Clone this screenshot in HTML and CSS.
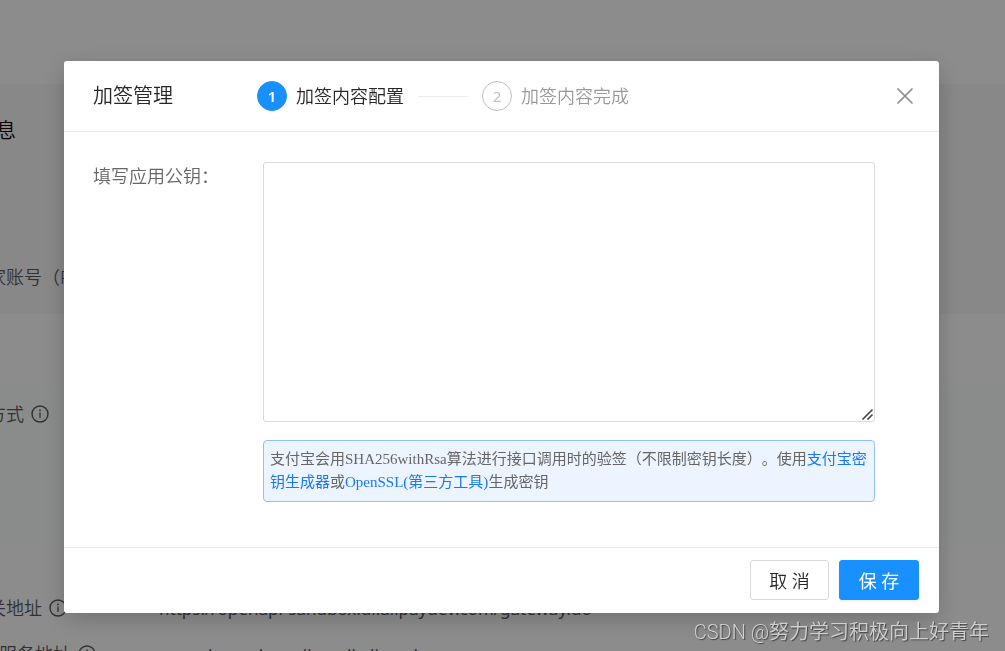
FILE: index.html
```
<!DOCTYPE html>
<html lang="zh-CN">
<head>
<meta charset="utf-8">
<title>加签管理</title>
<link rel="stylesheet" href="styles.css">
</head>
<body>
<svg class="sprite" aria-hidden="true">
  <symbol id="info" viewBox="0 0 18 18">
    <circle cx="9" cy="9" r="8" fill="none" stroke="currentColor" stroke-width="1.4"/>
    <circle cx="9" cy="5.4" r=".9" fill="currentColor"/>
    <path d="M9 7.6v5.4" stroke="currentColor" stroke-width="1.3"/>
  </symbol>
</svg>
<div class="page">
  <div class="topbar"></div>
  <section class="basic">
    <h2 class="heading"><span>息</span></h2>
    <div class="row account"><span class="label">家账号（PID）</span></div>
  </section>
  <section class="config">
    <div class="row method"><span class="label">方式<svg class="info"><use href="#info"/></svg></span></div>
  </section>
  <section class="addresses">
    <div class="row"><span class="label">关地址<svg class="info"><use href="#info"/></svg></span><span class="value">https://openapi-sandbox.dl.alipaydev.com/gateway.do</span></div>
    <div class="row"><span class="label wide">服务地址<svg class="info"><use href="#info"/></svg></span><span class="value">openchannel-sandbox.dl.alipaydev.com</span></div>
  </section>
</div>
<div class="mask">
  <div class="modal" role="dialog" aria-modal="true" aria-labelledby="title">
    <header class="modal-head">
      <h1 class="title" id="title">加签管理</h1>
      <ol class="steps">
        <li class="step active"><span class="num">1</span>加签内容配置</li>
        <li class="step"><span class="num">2</span>加签内容完成</li>
      </ol>
      <button class="close" type="button" aria-label="关闭"><svg viewBox="0 0 16 16"><path d="M1 1l14 14M15 1L1 15" stroke="currentColor" stroke-width="1.7" fill="none" stroke-linecap="round"/></svg></button>
    </header>
    <div class="modal-body">
      <label class="field-label" for="key">填写应用公钥：</label>
      <div class="field">
        <textarea class="key" id="key"></textarea>
        <p class="tip">支付宝会用SHA256withRsa算法进行接口调用时的验签（不限制密钥长度）。使用<a href="#">支付宝密钥生成器</a>或<a href="#">OpenSSL(第三方工具)</a>生成密钥</p>
      </div>
    </div>
    <footer class="modal-foot">
      <button class="btn" type="button">取 消</button>
      <button class="btn primary" type="button">保 存</button>
    </footer>
  </div>
</div>
<div class="watermark">CSDN @努力学习积极向上好青年</div>
</body>
</html>
```
FILE: styles.css
```
* { box-sizing: border-box; }
body {
  margin: 0;
  height: 100vh;
  overflow: hidden;
  font-family: "Noto Sans", "Noto Sans CJK SC", sans-serif;
  font-weight: 350;
  font-size: 18px;
  color: #262626;
  text-spacing-trim: space-all;
}
.sprite { position: absolute; width: 0; height: 0; }

.page { height: 100vh; overflow: hidden; background: #fff; color: #595959; }
.topbar { height: 84px; }
.basic { height: 230px; padding-top: 33px; background: #f8f8f8; }
.heading {
  display: flex;
  justify-content: flex-end;
  width: 16px;
  margin: 0 0 118px;
  font-size: 20px;
  line-height: 28px;
  font-weight: 350;
  color: #000;
}
.row { display: flex; line-height: 28px; height: 46px; white-space: nowrap; }
.label {
  display: flex;
  align-items: center;
  justify-content: flex-end;
  gap: 7px;
  width: 67px;
  height: 28px;
  margin-right: 92px;
}
.account .label { width: 107px; }
.method .label { width: 49px; }
.label.wide { width: 96px; margin-right: 63px; }
.value { font-size: 17px; font-weight: 400; line-height: 30px; }
.info { flex: none; width: 18px; height: 18px; }
.config { height: 264px; padding-top: 86px; background: linear-gradient(#fff 40px, #fbfffd 90px, #fbfffd 200px, #fff); }
.addresses { padding-top: 16px; }

.mask {
  position: fixed;
  inset: 0;
  padding: 61px 66px 0 64px;
  background: rgba(0, 0, 0, .45);
}
.modal {
  background: #fff;
  border-radius: 3px;
  box-shadow: 0 6px 24px rgba(0, 0, 0, .2);
}
.modal-head {
  display: flex;
  align-items: center;
  height: 71px;
  padding: 0 24px 0 29px;
  border-bottom: 1px solid #ebebeb;
}
.title { margin: 0; width: 164px; font-size: 20px; line-height: 28px; font-weight: 350; }
.steps { display: flex; flex: 1; margin: 0; padding: 0; list-style: none; }
.step { display: flex; align-items: center; line-height: 30px; color: #999; }
.step.active { color: #262626; }
.step.active::after { content: ""; width: 50px; height: 1px; margin: 0 14px; background: #ededed; }
.num {
  width: 30px;
  height: 30px;
  margin-right: 9px;
  border: 1px solid #bfbfbf;
  border-radius: 50%;
  font-size: 15px;
  line-height: 28px;
  font-weight: 400;
  text-align: center;
  color: #bfbfbf;
}
.active .num { background: #1890ff; border-color: #1890ff; color: #fff; font-weight: 600; }
.close { display: flex; padding: 2px; border: 0; background: none; color: #8c8c8c; }
.close svg { width: 16px; height: 16px; }

.modal-body { display: flex; padding: 30px 64px 45px 29px; }
.field-label { flex: none; width: 170px; line-height: 28px; color: #666; }
.field { flex: 1; }
.key {
  display: block;
  width: 100%;
  height: 260px;
  border: 1px solid #d9d9d9;
  border-radius: 3px;
  resize: vertical;
  outline: 0;
}
.key::-webkit-resizer {
  background: url("data:image/svg+xml,%3Csvg xmlns='http://www.w3.org/2000/svg' width='15' height='15'%3E%3Cpath d='M3.5 13.5l10-10M8.5 13.5l5-5' stroke='%23444' stroke-width='1.6'/%3E%3C/svg%3E") no-repeat;
}
.tip {
  margin: 18px 0 0;
  padding: 7px 6px;
  border: 1px solid #91bfff;
  border-radius: 4px;
  background: #ebf4ff;
  font-family: "Liberation Serif", "Noto Sans CJK SC", serif;
  font-size: 15px;
  font-weight: 400;
  line-height: 23px;
  color: #666;
}
.tip a { color: #1677ff; text-decoration: none; }

.modal-foot {
  display: flex;
  justify-content: flex-end;
  gap: 10px;
  padding: 12px 20px 13px;
  border-top: 1px solid #ebebeb;
}
.btn {
  width: 79px;
  height: 40px;
  padding: 0;
  border: 1px solid #d9d9d9;
  border-radius: 3px;
  background: #fff;
  font: inherit;
  color: #262626;
}
.btn.primary { width: 80px; background: #1890ff; border-color: #1890ff; color: #fff; font-weight: 400; box-shadow: 0 2px 2px rgba(0, 0, 0, .05); }
.watermark {
  position: fixed;
  right: 16px;
  bottom: 5px;
  font-family: Roboto, "Noto Sans CJK SC", sans-serif;
  font-size: 20px;
  line-height: 28px;
  color: #d0d0d0;
  text-shadow: 1px 1px 1px #444;
}
```
